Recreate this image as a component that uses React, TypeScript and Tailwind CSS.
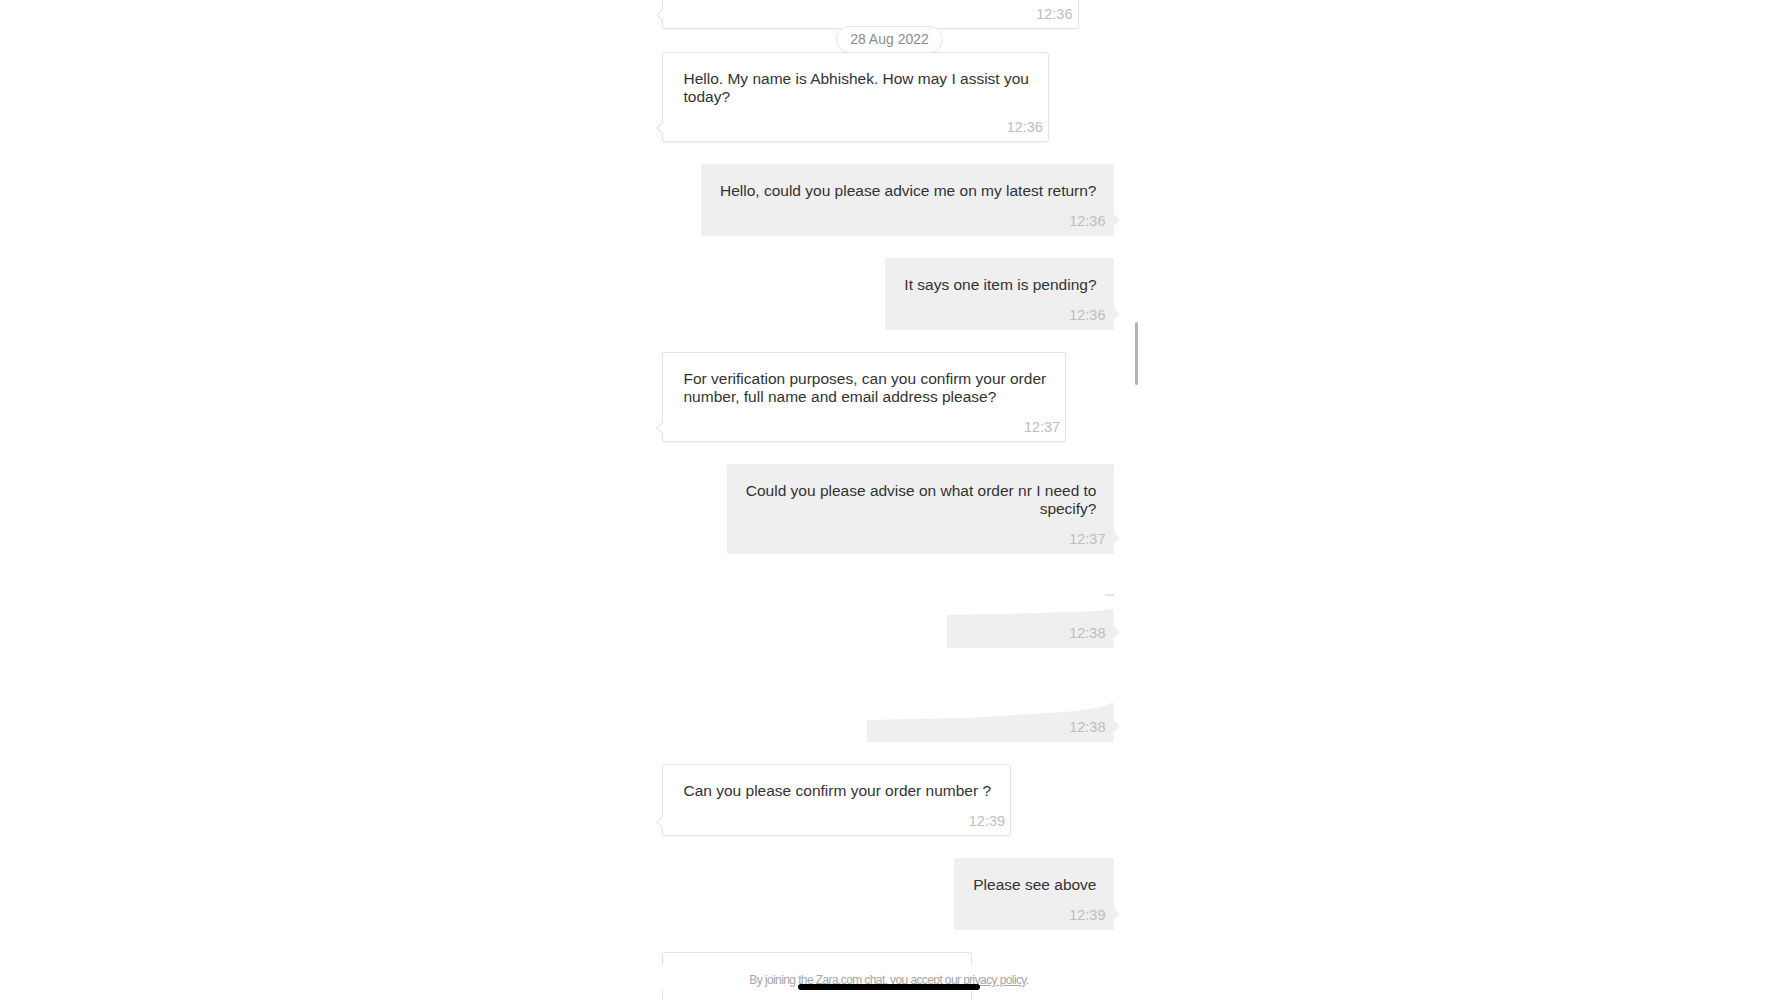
import React from 'react';

type Msg =
  | { kind: 'agent'; lines: string[]; time: string }
  | { kind: 'user'; lines: string[]; time: string }
  | { kind: 'redacted'; time: string; width: string; clip: string; mark?: boolean };

const font = { fontFamily: '"Liberation Sans", Arial, sans-serif' };

const Lines = ({ lines }: { lines: string[] }) => (
  <>
    {lines.map((l, i) => (
      <React.Fragment key={i}>
        {i > 0 && <br />}
        {l}
      </React.Fragment>
    ))}
  </>
);

const AgentBubble = ({ lines, time }: { lines: string[]; time: string }) => (
  <div className="relative w-fit self-start rounded-[3px] border border-[#e3e3e3] bg-white pl-[21px] pr-[19px] pt-[17px] pb-[4px] shadow-[0_1px_2px_rgba(0,0,0,0.05)]">
    <span className="absolute left-[-5px] bottom-[9px] h-[8px] w-[8px] rotate-45 border-b border-l border-[#e3e3e3] bg-white" />
    <p className="whitespace-nowrap text-[15.5px] leading-[18px] text-[#333]">
      <Lines lines={lines} />
    </p>
    <p className="mt-[12px] mr-[-14px] text-right text-[14.5px] leading-[19px] text-[#bdbdbd]">{time}</p>
  </div>
);

const UserBubble = ({ lines, time }: { lines: string[]; time: string }) => (
  <div className="relative w-fit self-end rounded-[2px] bg-[#efefef] pl-[19px] pr-[17px] pt-[18px] pb-[5px]">
    <span className="absolute right-[-4px] bottom-[12px] h-[8px] w-[8px] rotate-45 bg-[#efefef]" />
    <p className="whitespace-nowrap text-right text-[15.5px] leading-[18px] text-[#333]">
      <Lines lines={lines} />
    </p>
    <p className="mt-[12px] mr-[-9px] text-right text-[14.5px] leading-[19px] text-[#bdbdbd]">{time}</p>
  </div>
);

// text of these two was blanked out in the screenshot, only the time is left
const RedactedBubble = ({ time, width, clip, mark }: { time: string; width: string; clip: string; mark?: boolean }) => (
  <div className={`relative self-end ${width}`}>
    <div className={`flex h-[72px] flex-col items-end justify-end bg-[#efefef] pr-[8px] pb-[5px] ${clip}`}>
      <p className="text-[14.5px] leading-[19px] text-[#bdbdbd]">{time}</p>
    </div>
    <span className="absolute right-[-4px] bottom-[12px] h-[8px] w-[8px] rotate-45 bg-[#efefef]" />
    {mark && <span className="absolute right-0 top-[18px] h-[2px] w-[9px] bg-[#e4e4e4]" />}
  </div>
);

const messages: Msg[] = [
  { kind: 'agent', lines: ['Hello. My name is Abhishek. How may I assist you', 'today?'], time: '12:36' },
  { kind: 'user', lines: ['Hello, could you please advice me on my latest return?'], time: '12:36' },
  { kind: 'user', lines: ['It says one item is pending?'], time: '12:36' },
  {
    kind: 'agent',
    lines: ['For verification purposes, can you confirm your order', 'number, full name and email address please?'],
    time: '12:37',
  },
  { kind: 'user', lines: ['Could you please advise on what order nr I need to', 'specify?'], time: '12:37' },
  {
    kind: 'redacted',
    time: '12:38',
    width: 'w-[167px]',
    clip: '[clip-path:polygon(0_39px,55%_37px,93%_35px,96%_33px,100%_34px,100%_100%,0_100%)]',
    mark: true,
  },
  {
    kind: 'redacted',
    time: '12:38',
    width: 'w-[247px]',
    clip: '[clip-path:polygon(0_50px,40%_48px,68%_44px,85%_41px,95%_37px,100%_32px,100%_100%,0_100%)]',
  },
  { kind: 'agent', lines: ['Can you please confirm your order number ?'], time: '12:39' },
  { kind: 'user', lines: ['Please see above'], time: '12:39' },
];

export default function App() {
  return (
    <div
      className="relative flex h-[1000px] w-full items-start justify-center overflow-hidden bg-white pr-[3px]"
      style={font}
    >
      <div className="relative flex w-[452px] shrink-0 flex-col">
        {/* partially scrolled-off agent message */}
        <div className="relative mt-[-31px] flex h-[60px] w-[417px] shrink-0 flex-col justify-end rounded-[3px] border border-[#e3e3e3] bg-white pr-[5px] pb-[4px] shadow-[0_1px_2px_rgba(0,0,0,0.05)]">
          <span className="absolute left-[-5px] bottom-[9px] h-[8px] w-[8px] rotate-45 border-b border-l border-[#e3e3e3] bg-white" />
          <p className="text-right text-[14.5px] leading-[19px] text-[#bdbdbd]">12:36</p>
        </div>

        {/* date separator */}
        <div className="relative z-10 mt-[-3px] ml-[4px] self-center rounded-full border border-[#e6e6e6] bg-white px-[13px] text-[14px] leading-[25px] text-[#8c8c8c]">
          28 Aug 2022
        </div>

        <div className="mt-[-1px] flex flex-col gap-[22px]">
          {messages.map((m, i) => {
            if (m.kind === 'agent') return <AgentBubble key={i} lines={m.lines} time={m.time} />;
            if (m.kind === 'user') return <UserBubble key={i} lines={m.lines} time={m.time} />;
            return <RedactedBubble key={i} time={m.time} width={m.width} clip={m.clip} mark={m.mark} />;
          })}

          {/* next agent message, cut by the bottom edge */}
          <div className="h-[80px] w-[310px] rounded-[3px] border border-[#e3e3e3] bg-white" />
        </div>

        {/* scroll indicator */}
        <div className="absolute left-[473px] top-[322px] h-[63px] w-[3px] rounded-full bg-[#b3b3b3]" />
      </div>

      {/* footer note over the list */}
      <div className="absolute inset-x-0 top-[965px] flex justify-center">
        <div className="flex h-[24px] w-[460px] items-center justify-center bg-white pt-[6px]">
          <p className="text-[12px] tracking-[-0.6px] text-[#a6a6a6]">
            By joining <span className="underline">the Zara.com chat, you accept our privacy policy</span>.
          </p>
        </div>
      </div>

      {/* home indicator */}
      <div className="absolute inset-x-0 top-[984px] flex justify-center">
        <div className="h-[6px] w-[182px] rounded-full bg-black" />
      </div>
    </div>
  );
}
